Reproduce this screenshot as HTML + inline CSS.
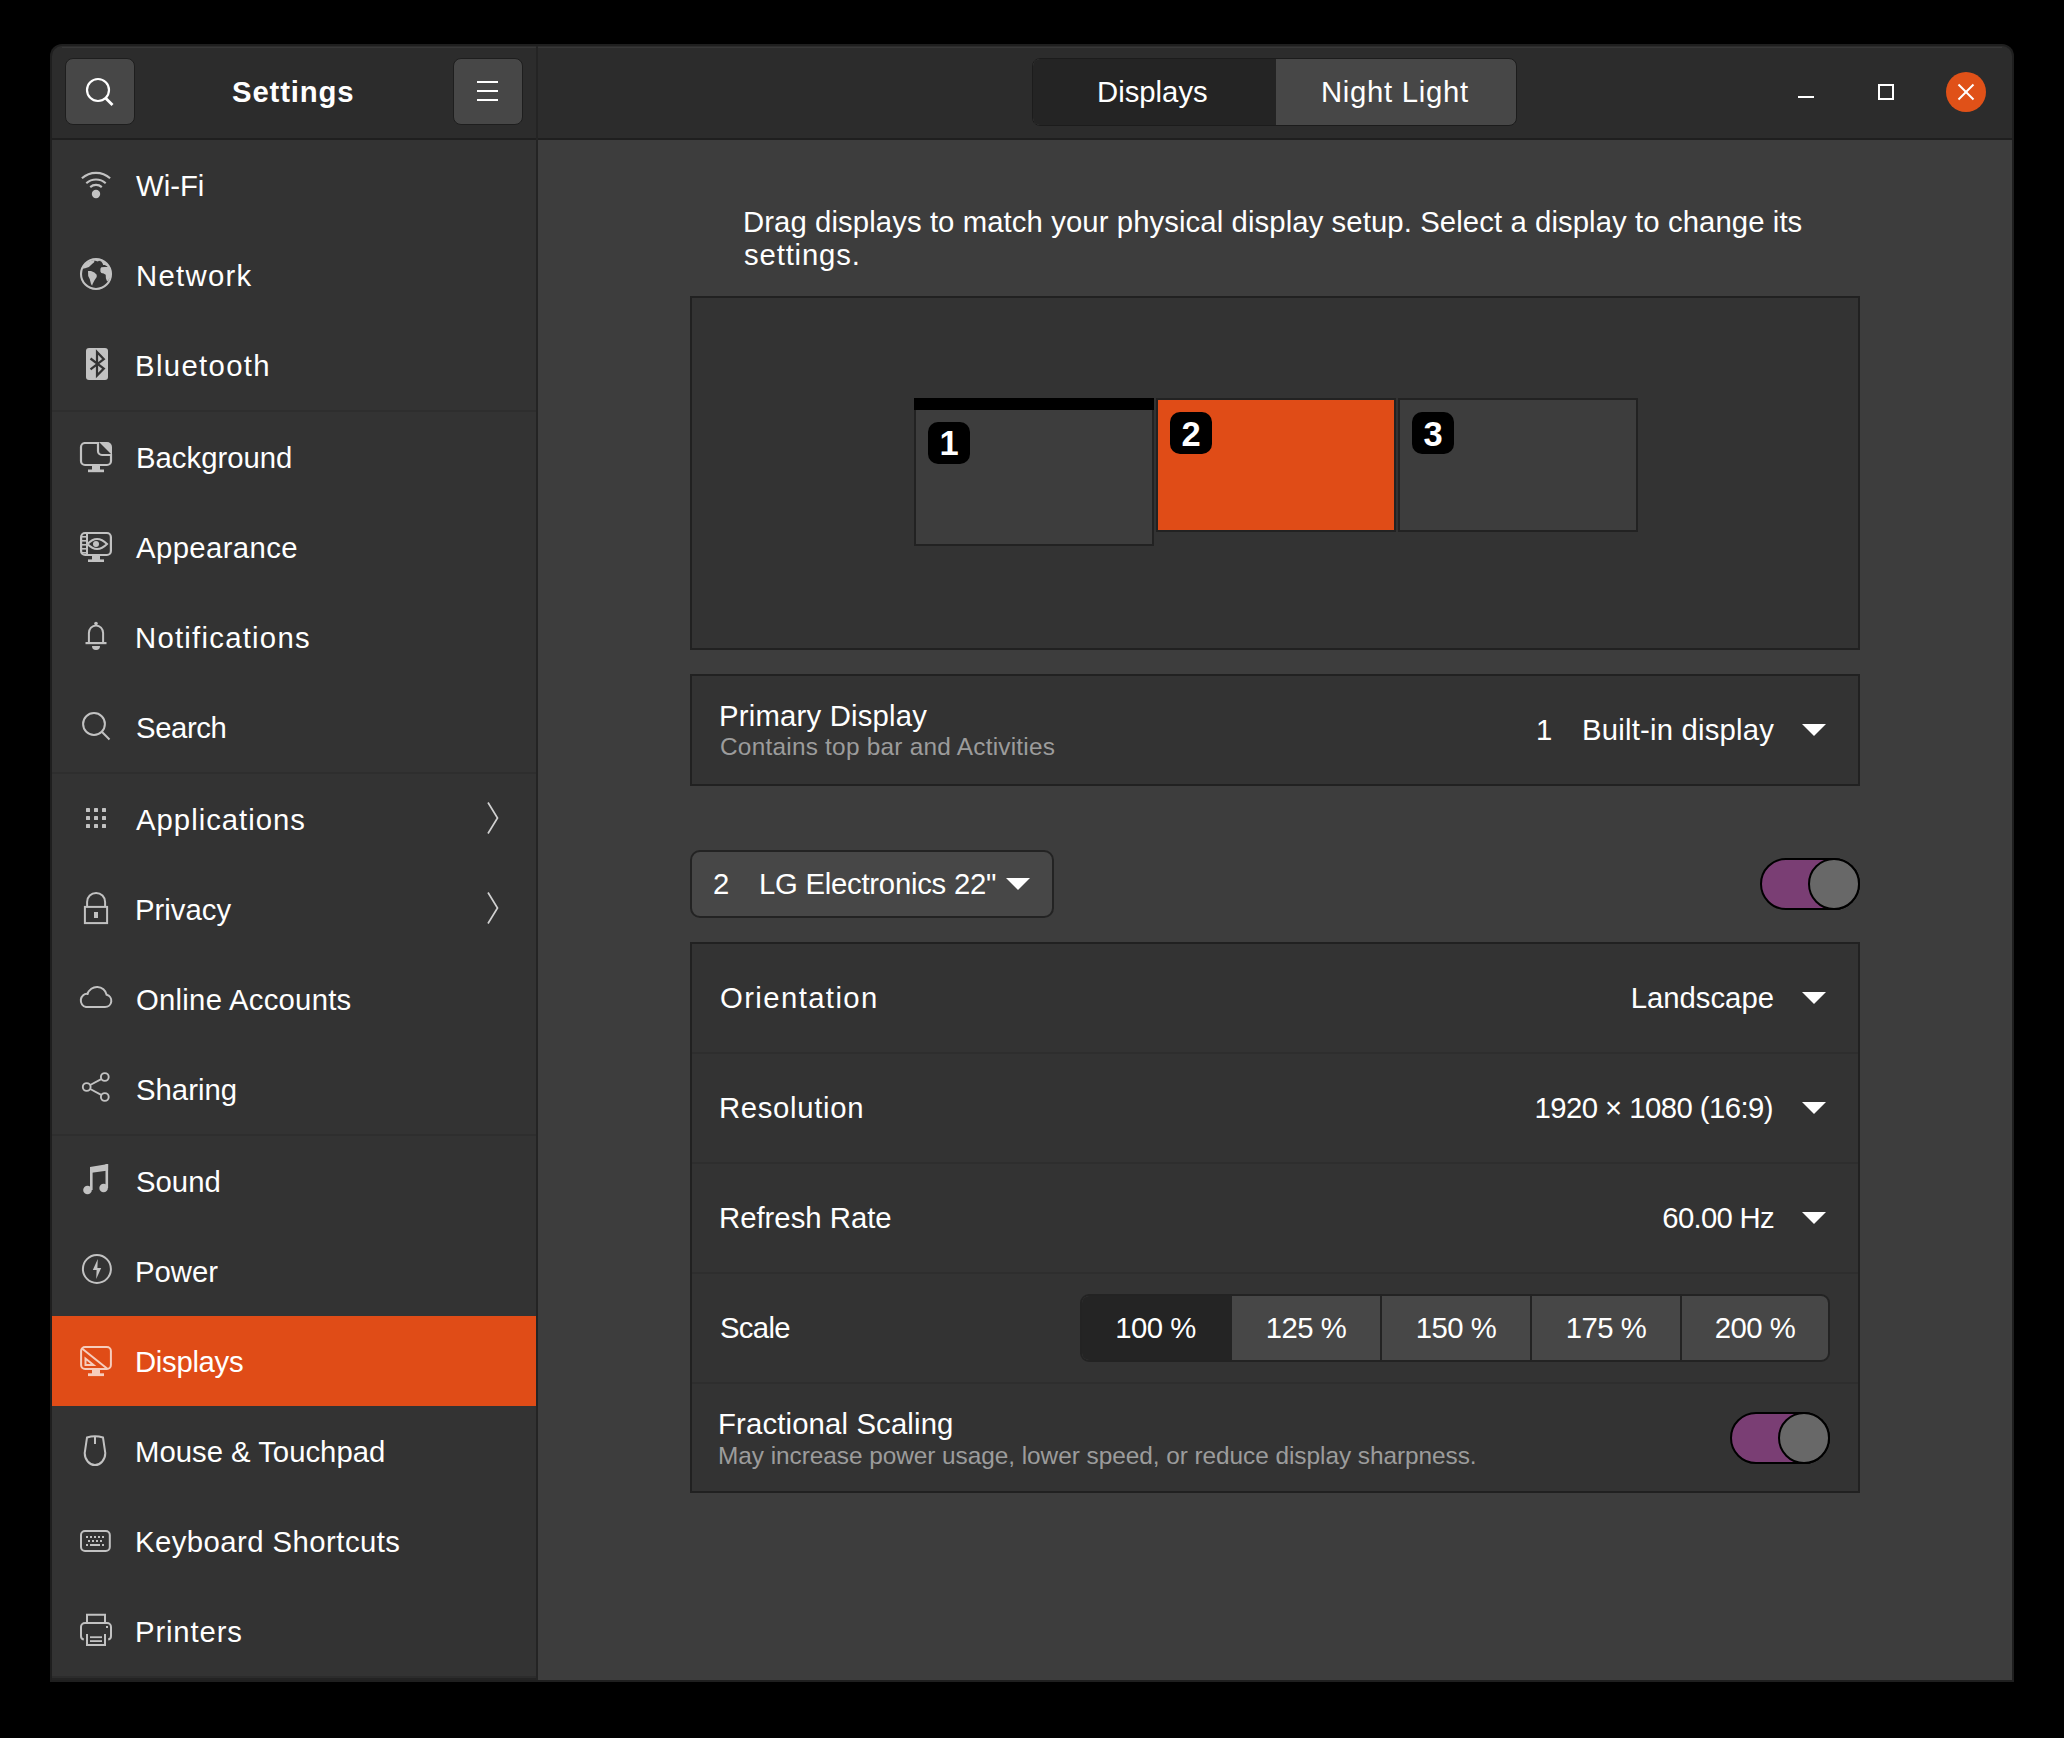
<!DOCTYPE html>
<html><head><meta charset="utf-8">
<style>
html,body{margin:0;padding:0;background:#000;width:2064px;height:1738px;overflow:hidden;}
body{font-family:"Liberation Sans",sans-serif;color:#fff;position:relative;}
.a{position:absolute;}
.t{position:absolute;white-space:nowrap;font-size:29.3px;line-height:34px;color:#fff;}
.s{position:absolute;white-space:nowrap;font-size:24.4px;line-height:28px;color:#9c9c9c;}
#win{position:absolute;left:50px;top:44px;width:1964px;height:1638px;background:#1f1f1f;border-radius:12px 12px 0 0;overflow:hidden;}
#hdr{position:absolute;left:52px;top:46px;width:1960px;height:92px;background:#2c2c2c;border-radius:10px 10px 0 0;}
svg{position:absolute;overflow:visible;}
.sep{position:absolute;left:52px;width:484px;height:2px;background:#2e2e2e;}
.tri{position:absolute;width:0;height:0;border-left:12px solid transparent;border-right:12px solid transparent;border-top:12px solid #fff;}
.frame{position:absolute;background:#333;border:2px solid #212121;box-sizing:border-box;}
.rsep{position:absolute;left:692px;width:1166px;height:2px;background:#2e2e2e;}
</style></head><body>
<div id="win"></div><div id="hdr"></div>
<!-- header top highlight -->
<div class="a" style="left:62px;top:47px;width:1940px;height:1px;background:#383838;"></div>
<!-- header bottom border -->
<div class="a" style="left:52px;top:138px;width:1960px;height:2px;background:#1f1f1f;"></div>
<!-- sidebar -->
<div class="a" style="left:52px;top:140px;width:484px;height:1540px;background:#333333;"></div>

<!-- sidebar separator -->
<div class="a" style="left:536px;top:46px;width:2px;height:1634px;background:#242424;"></div>
<!-- content -->
<div class="a" style="left:538px;top:140px;width:1474px;height:1540px;background:#3d3d3d;"></div>

<!-- header: search button -->
<div class="a" style="left:65px;top:58px;width:70px;height:67px;box-sizing:border-box;border:1.5px solid #1e1e1e;border-radius:8px;background:#474747;"></div>
<svg style="left:0;top:0" width="2064" height="200" viewBox="0 0 2064 200">
  <circle cx="98" cy="90" r="11" fill="none" stroke="#fff" stroke-width="2.2"/>
  <line x1="105.5" y1="98" x2="112.5" y2="105" stroke="#fff" stroke-width="2.8"/>
</svg>
<div class="t" style="left:232px;top:75px;font-weight:bold;font-size:29.3px;letter-spacing:0.85px;">Settings</div>
<!-- menu button -->
<div class="a" style="left:453px;top:58px;width:70px;height:67px;box-sizing:border-box;border:1.5px solid #1e1e1e;border-radius:8px;background:#474747;"></div>
<div class="a" style="left:477px;top:81px;width:21px;height:2px;background:#fff;"></div>
<div class="a" style="left:477px;top:90px;width:21px;height:2px;background:#fff;"></div>
<div class="a" style="left:477px;top:99px;width:21px;height:2px;background:#fff;"></div>

<!-- tabs -->
<div class="a" style="left:1032px;top:58px;width:485px;height:68px;box-sizing:border-box;border:1px solid #1c1c1c;border-radius:8px;background:#474747;overflow:hidden;">
  <div class="a" style="left:0;top:0;width:243px;height:66px;background:#242424;"></div>
</div>
<div class="t" style="left:1097px;top:75px;">Displays</div>
<div class="t" style="left:1321px;top:75px;letter-spacing:0.7px;">Night Light</div>

<!-- window controls -->
<div class="a" style="left:1798px;top:96px;width:16px;height:2px;background:#fff;"></div>
<div class="a" style="left:1878px;top:84px;width:16px;height:16px;box-sizing:border-box;border:2px solid #fff;"></div>
<div class="a" style="left:1946px;top:72px;width:40px;height:40px;border-radius:50%;background:#e05118;"></div>
<svg style="left:0;top:0" width="2064" height="200" viewBox="0 0 2064 200">
  <line x1="1958.5" y1="84.5" x2="1973.5" y2="99.5" stroke="#fff" stroke-width="2"/>
  <line x1="1973.5" y1="84.5" x2="1958.5" y2="99.5" stroke="#fff" stroke-width="2"/>
</svg>

<!-- sidebar separators -->
<div class="a" style="left:52px;top:1676px;width:484px;height:2px;background:#2c2c2c;"></div>
<div class="a" style="left:52px;top:1678px;width:484px;height:2px;background:#232323;"></div>
<div class="sep" style="top:410px;"></div>
<div class="sep" style="top:772px;"></div>
<div class="sep" style="top:1134px;"></div>
<!-- displays highlight -->
<div class="a" style="left:52px;top:1316px;width:484px;height:90px;background:#e04c17;"></div>

<!-- sidebar labels -->
<div class="t" style="left:136px;top:169px;">Wi-Fi</div>
<div class="t" style="left:136px;top:259px;letter-spacing:1.3px;">Network</div>
<div class="t" style="left:135px;top:349px;letter-spacing:1.35px;">Bluetooth</div>
<div class="t" style="left:136px;top:441px;">Background</div>
<div class="t" style="left:136px;top:531px;letter-spacing:0.4px;">Appearance</div>
<div class="t" style="left:135px;top:621px;letter-spacing:1.25px;">Notifications</div>
<div class="t" style="left:136px;top:711px;letter-spacing:-0.4px;">Search</div>
<div class="t" style="left:136px;top:803px;letter-spacing:1.0px;">Applications</div>
<div class="t" style="left:135px;top:893px;">Privacy</div>
<div class="t" style="left:136px;top:983px;letter-spacing:0.25px;">Online Accounts</div>
<div class="t" style="left:136px;top:1073px;">Sharing</div>
<div class="t" style="left:136px;top:1165px;">Sound</div>
<div class="t" style="left:135px;top:1255px;">Power</div>
<div class="t" style="left:135px;top:1345px;letter-spacing:-0.3px;">Displays</div>
<div class="t" style="left:135px;top:1435px;">Mouse &amp; Touchpad</div>
<div class="t" style="left:135px;top:1525px;letter-spacing:0.45px;">Keyboard Shortcuts</div>
<div class="t" style="left:135px;top:1615px;letter-spacing:0.85px;">Printers</div>

<!-- ICONS placeholder -->
<svg id="icons" style="left:0;top:0" width="600" height="1738" viewBox="0 0 600 1738">
 <g fill="none" stroke="#c2c2c2" stroke-width="2.1">
  <!-- wifi -->
  <path d="M81.9,178.3 A21,21 0 0 1 110.1,178.3" />
  <path d="M86.3,183.2 A14.5,14.5 0 0 1 105.7,183.2" />
  <path d="M90.2,187.1 A8.8,8.8 0 0 1 101.8,187.1" />
 </g>
 <circle cx="96" cy="194" r="4.2" fill="#c2c2c2"/>
 <!-- globe -->
 <circle cx="96" cy="274" r="15" fill="none" stroke="#c2c2c2" stroke-width="2.1"/>
 <path fill="#c2c2c2" d="M82.3,268.8 L85.2,268.3 L88.9,266.9 L92.1,263.9 L94.2,262.3 L94.4,260.6 L97.9,261.4 L99,260.7 L101.3,261.6 L102.5,263.2 L103.2,265 L104.8,265 L107.8,266.7 L109.6,268.2 A15,15 0 0 0 82.3,268.8 Z M88,271 L91,271 L94.4,272.4 L96.7,274.7 L96.7,277 L94.4,280.5 L92.6,283.9 L92.1,285.8 L91,283.9 L89.8,279.3 L88.2,275.9 Z M100.4,268.7 L101.3,267.3 L104.8,266.9 L108.2,267.1 L110.5,269 L111.2,272.4 L110.5,277 L108.2,280.5 L107.1,281.6 L105.9,278.2 L105.7,274.7 L103.6,273.6 L101.3,272.9 L100.4,271.5 Z"/>
 <!-- bluetooth -->
 <rect x="86" y="348" width="22" height="32" rx="3" fill="#c2c2c2"/>
 <path d="M90.5,358.5 L103.8,368.6 L97,375.5 L97,352 L103.8,359.2 L90.5,369.4" fill="none" stroke="#333" stroke-width="2.2"/>
 <!-- background -->
 <path d="M84,443 H98 V451 A4,4 0 0 0 102,455 H111 V461 A4,4 0 0 1 107,465 H85 A4,4 0 0 1 81,461 V447 A4,4 0 0 1 85,443 Z" fill="none" stroke="#c2c2c2" stroke-width="2.2"/>
 <path d="M99,442 H107 A5,5 0 0 1 112,447 V455 Z" fill="#c2c2c2"/>
 <rect x="92" y="466" width="8" height="4" fill="#c2c2c2"/>
 <rect x="88" y="469.5" width="16" height="2.7" fill="#c2c2c2"/>
 <!-- appearance -->
 <rect x="81.1" y="533" width="29.8" height="22" rx="4" fill="none" stroke="#c2c2c2" stroke-width="2.2"/>
 <line x1="87" y1="533" x2="87" y2="555" stroke="#c2c2c2" stroke-width="2"/>
 <g fill="#c2c2c2"><rect x="82" y="536" width="4" height="1.6"/><rect x="82" y="540" width="4" height="1.6"/><rect x="82" y="544" width="4" height="1.6"/><rect x="82" y="548" width="4" height="1.6"/><rect x="82" y="552" width="4" height="1.6"/></g>
 <path d="M87.5,544 Q97,534 107,544 Q97,554 87.5,544 Z" fill="none" stroke="#c2c2c2" stroke-width="2"/>
 <circle cx="96" cy="544" r="3" fill="#c2c2c2"/>
 <rect x="92" y="555.5" width="8" height="4.5" fill="#c2c2c2"/>
 <rect x="88" y="559.4" width="16" height="2.6" fill="#c2c2c2"/>
 <!-- notifications bell -->
 <path d="M88.9,642.5 V633 A7.1,7.6 0 0 1 103.1,633 V642.5" fill="none" stroke="#c2c2c2" stroke-width="2"/>
 <rect x="85.5" y="642" width="21" height="2.2" fill="#c2c2c2"/>
 <circle cx="96" cy="623.5" r="1.8" fill="#c2c2c2"/>
 <path d="M92,646 H100 A4,4 0 0 1 92,646 Z" fill="#c2c2c2"/>
 <!-- search -->
 <circle cx="94" cy="724" r="10.9" fill="none" stroke="#c2c2c2" stroke-width="2"/>
 <line x1="101.8" y1="731.8" x2="109.5" y2="739.5" stroke="#c2c2c2" stroke-width="2"/>
 <!-- applications grid -->
 <g fill="#c2c2c2">
  <rect x="86" y="808" width="4" height="4" rx=".6"/><rect x="94" y="808" width="4" height="4" rx=".6"/><rect x="102" y="808" width="4" height="4" rx=".6"/>
  <rect x="86" y="816" width="4" height="4" rx=".6"/><rect x="94" y="816" width="4" height="4" rx=".6"/><rect x="102" y="816" width="4" height="4" rx=".6"/>
  <rect x="86" y="824" width="4" height="4" rx=".6"/><rect x="94" y="824" width="4" height="4" rx=".6"/><rect x="102" y="824" width="4" height="4" rx=".6"/>
 </g>
 <!-- privacy lock -->
 <path d="M87.1,907 V902 A8.9,9 0 0 1 105.1,902 V907" fill="none" stroke="#c2c2c2" stroke-width="2"/>
 <rect x="84.9" y="906.9" width="22.2" height="16.2" fill="none" stroke="#c2c2c2" stroke-width="2"/>
 <rect x="94" y="912" width="4" height="6" fill="#c2c2c2"/>
 <!-- cloud -->
 <path d="M86,1007 A5,5.5 0 0 1 87.6,993.9 A9.8,9.8 0 0 1 106.6,994.8 A6.3,6.2 0 0 1 105,1007 Z" fill="none" stroke="#c2c2c2" stroke-width="2"/>
 <!-- share -->
 <g fill="none" stroke="#c2c2c2" stroke-width="1.9">
  <circle cx="86.7" cy="1087" r="3.9"/>
  <circle cx="104.8" cy="1077" r="3.9"/>
  <circle cx="104.8" cy="1097" r="3.9"/>
  <line x1="90.2" y1="1085" x2="101.2" y2="1079.2"/>
  <line x1="90.2" y1="1089" x2="101.2" y2="1094.8"/>
 </g>
 <!-- sound -->
 <g fill="#c2c2c2">
  <circle cx="87.5" cy="1190" r="4.3"/>
  <circle cx="103.6" cy="1188" r="4.3"/>
  <rect x="90" y="1167" width="2.6" height="23"/>
  <rect x="105.5" y="1164" width="2.6" height="24"/>
  <path d="M90,1167 L108.1,1164 L108.1,1170.6 L90,1173 Z"/>
 </g>
 <!-- power -->
 <circle cx="96.9" cy="1269" r="14" fill="none" stroke="#c2c2c2" stroke-width="2"/>
 <path d="M97.8,1259 L92.8,1270 L96.6,1270 L96.2,1279 L101.2,1268 L97.4,1268 Z" fill="#c2c2c2"/>
 <!-- displays (on orange) -->
 <g stroke="#f6cdbd" fill="none" stroke-width="2">
  <rect x="81.1" y="1347" width="29.8" height="22" rx="4"/>
  <line x1="82" y1="1348.5" x2="107" y2="1368.5"/>
  <path d="M85.5,1358.5 L85.5,1365 L93.5,1365 Z"/>
 </g>
 <rect x="92" y="1370" width="8" height="4" fill="#f6cdbd"/>
 <rect x="88" y="1373.3" width="16" height="2.8" fill="#f6cdbd"/>
 <!-- mouse -->
 <path d="M87,1437.5 Q95,1435 103,1437.5 L105.3,1453 A10.3,12 0 0 1 84.7,1453 Z" fill="none" stroke="#c2c2c2" stroke-width="2"/>
 <line x1="95" y1="1436" x2="95" y2="1444" stroke="#c2c2c2" stroke-width="2"/>
 <!-- keyboard -->
 <rect x="81" y="1531" width="28.8" height="20" rx="4" fill="none" stroke="#c2c2c2" stroke-width="2"/>
 <g fill="#c2c2c2">
  <rect x="86" y="1536" width="2" height="2"/><rect x="90" y="1536" width="2" height="2"/><rect x="94" y="1536" width="2" height="2"/><rect x="98" y="1536" width="2" height="2"/><rect x="102" y="1536" width="2" height="2"/>
  <rect x="88" y="1540" width="2" height="2"/><rect x="92" y="1540" width="2" height="2"/><rect x="96" y="1540" width="2" height="2"/><rect x="100" y="1540" width="2" height="2"/>
  <rect x="86" y="1544" width="2" height="2"/><rect x="90" y="1544" width="10" height="2"/><rect x="102" y="1544" width="2" height="2"/>
 </g>
 <!-- printer -->
 <g fill="none" stroke="#c2c2c2" stroke-width="2">
  <path d="M87,1622.5 V1614.8 H105 V1622.5"/>
  <path d="M83.8,1639.5 A3.5,3.5 0 0 1 81,1636 V1627 A4,4 0 0 1 85,1623 H107 A4,4 0 0 1 111,1627 V1636 A3.5,3.5 0 0 1 108.2,1639.5"/>
  <path d="M87,1634 V1645 H105 V1634"/>
 </g>
 <g fill="#c2c2c2">
  <rect x="90" y="1636.3" width="12" height="1.8"/>
  <rect x="90" y="1640.2" width="12" height="1.8"/>
  <rect x="106" y="1626" width="2" height="2"/>
 </g>
 <!-- chevrons -->
 <g fill="none" stroke="#d0d0d0" stroke-width="1.7">
  <path d="M488,802.5 L497.5,818 L488,833.5"/>
  <path d="M488,892.5 L497.5,908 L488,923.5"/>
 </g>
</svg>

<!-- content -->
<div class="t" style="left:743px;top:205px;letter-spacing:0.09px;">Drag displays to match your physical display setup. Select a display to change its</div>
<div class="t" style="left:744px;top:238px;letter-spacing:0.85px;">settings.</div>

<div class="frame" style="left:690px;top:296px;width:1170px;height:354px;"></div>
<!-- monitors -->
<div class="a" style="left:914px;top:398px;width:240px;height:148px;box-sizing:border-box;border:2px solid #222;background:#3d3d3d;"></div>
<div class="a" style="left:914px;top:398px;width:240px;height:12px;background:#000;"></div>
<div class="a" style="left:1156px;top:398px;width:240px;height:134px;box-sizing:border-box;border:2px solid #222;background:#e04c17;"></div>
<div class="a" style="left:1398px;top:398px;width:240px;height:134px;box-sizing:border-box;border:2px solid #222;background:#3d3d3d;"></div>
<div class="a" style="left:928px;top:422px;width:42px;height:42px;border-radius:10px;background:#000;"></div>
<div class="a" style="left:1170px;top:412px;width:42px;height:42px;border-radius:10px;background:#000;"></div>
<div class="a" style="left:1412px;top:412px;width:42px;height:42px;border-radius:10px;background:#000;"></div>
<div class="a" style="left:928px;top:422px;width:42px;height:42px;line-height:42px;text-align:center;font-weight:bold;font-size:34.5px;">1</div>
<div class="a" style="left:1170px;top:413px;width:42px;height:42px;line-height:42px;text-align:center;font-weight:bold;font-size:34.5px;">2</div>
<div class="a" style="left:1412px;top:413px;width:42px;height:42px;line-height:42px;text-align:center;font-weight:bold;font-size:34.5px;">3</div>

<!-- primary display -->
<div class="frame" style="left:690px;top:674px;width:1170px;height:112px;"></div>
<div class="t" style="left:719px;top:699px;letter-spacing:0.2px;">Primary Display</div>
<div class="s" style="left:720px;top:733px;letter-spacing:0.23px;">Contains top bar and Activities</div>
<div class="t" style="left:1536px;top:713px;">1</div>
<div class="t" style="left:1582px;top:713px;letter-spacing:0.2px;">Built-in display</div>
<div class="tri" style="left:1802px;top:724px;"></div>

<!-- LG dropdown -->
<div class="a" style="left:690px;top:850px;width:364px;height:68px;box-sizing:border-box;border:2px solid #232323;border-radius:10px;background:#474747;"></div>
<div class="t" style="left:713px;top:867px;">2</div>
<div class="t" style="left:759px;top:867px;letter-spacing:-0.25px;">LG Electronics 22"</div>
<div class="tri" style="left:1006px;top:878px;"></div>

<!-- toggle -->
<div class="a" style="left:1760px;top:858px;width:100px;height:52px;box-sizing:border-box;border:2px solid #000;border-radius:26px;background:#7a3e74;"></div>
<div class="a" style="left:1808px;top:858px;width:52px;height:52px;box-sizing:border-box;border:2px solid #000;border-radius:50%;background:#686868;"></div>

<!-- settings list -->
<div class="frame" style="left:690px;top:942px;width:1170px;height:551px;"></div>
<div class="rsep" style="top:1052px;"></div>
<div class="rsep" style="top:1162px;"></div>
<div class="rsep" style="top:1272px;"></div>
<div class="rsep" style="top:1382px;"></div>

<div class="t" style="left:720px;top:981px;letter-spacing:1.4px;">Orientation</div>
<div class="t" style="left:719px;top:1091px;letter-spacing:0.67px;">Resolution</div>
<div class="t" style="left:719px;top:1201px;">Refresh Rate</div>
<div class="t" style="left:720px;top:1311px;letter-spacing:-0.7px;">Scale</div>
<div class="t" style="left:718px;top:1407px;letter-spacing:0.15px;">Fractional Scaling</div>
<div class="s" style="left:718px;top:1442px;letter-spacing:-0.05px;">May increase power usage, lower speed, or reduce display sharpness.</div>

<div class="t" style="right:290px;top:981px;">Landscape</div>
<div class="tri" style="left:1802px;top:992px;"></div>
<div class="t" style="right:291px;top:1091px;letter-spacing:-0.55px;">1920 × 1080 (16:9)</div>
<div class="tri" style="left:1802px;top:1102px;"></div>
<div class="t" style="right:290px;top:1201px;letter-spacing:-0.7px;">60.00 Hz</div>
<div class="tri" style="left:1802px;top:1212px;"></div>

<!-- scale segmented -->
<div class="a" style="left:1080px;top:1294px;width:750px;height:68px;box-sizing:border-box;border:2px solid #232323;border-radius:9px;background:#474747;overflow:hidden;">
  <div class="a" style="left:0;top:0;width:150px;height:64px;background:#242424;"></div>
  <div class="a" style="left:298px;top:0;width:2px;height:64px;background:#232323;"></div>
  <div class="a" style="left:448px;top:0;width:2px;height:64px;background:#232323;"></div>
  <div class="a" style="left:598px;top:0;width:2px;height:64px;background:#232323;"></div>
</div>
<div class="t" style="left:1080px;top:1311px;width:151px;text-align:center;letter-spacing:-0.5px;">100 %</div>
<div class="t" style="left:1231px;top:1311px;width:150px;text-align:center;letter-spacing:-0.5px;">125 %</div>
<div class="t" style="left:1381px;top:1311px;width:150px;text-align:center;letter-spacing:-0.5px;">150 %</div>
<div class="t" style="left:1531px;top:1311px;width:150px;text-align:center;letter-spacing:-0.5px;">175 %</div>
<div class="t" style="left:1681px;top:1311px;width:148px;text-align:center;letter-spacing:-0.5px;">200 %</div>

<div class="a" style="left:1730px;top:1412px;width:100px;height:52px;box-sizing:border-box;border:2px solid #000;border-radius:26px;background:#7a3e74;"></div>
<div class="a" style="left:1778px;top:1412px;width:52px;height:52px;box-sizing:border-box;border:2px solid #000;border-radius:50%;background:#686868;"></div>

</body></html>
